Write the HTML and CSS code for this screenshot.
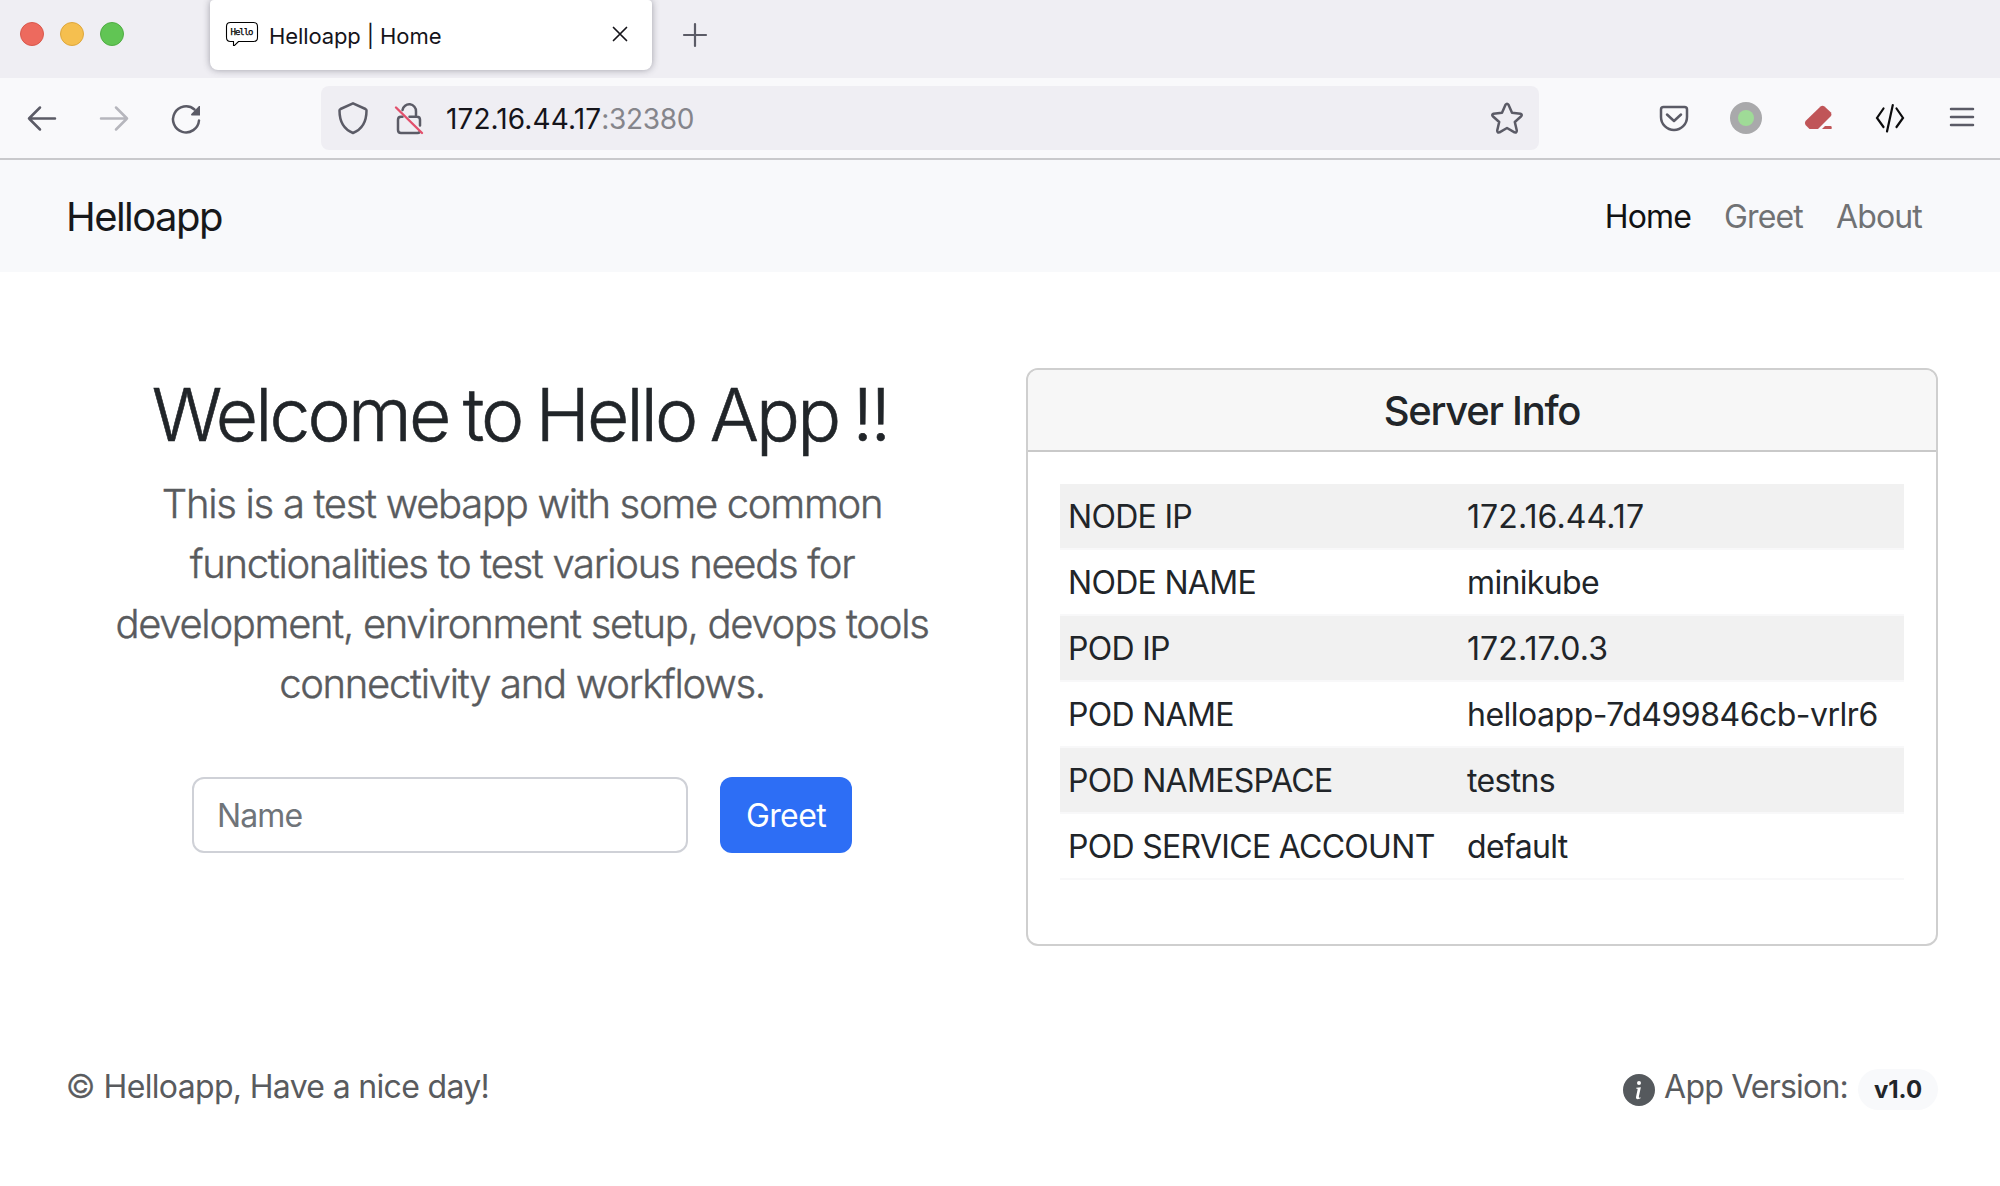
FILE: index.html
```html
<!DOCTYPE html>
<html lang="en">
<head>
<meta charset="utf-8">
<title>Helloapp | Home</title>
<link rel="stylesheet" href="styles.css">
</head>
<body>
<div class="tabstrip">
  <div class="lights"><span class="light light-red"></span><span class="light light-yellow"></span><span class="light light-green"></span></div>
  <div class="tab">
    <svg class="favicon" viewBox="0 0 32 24">
      <path d="M4.500 .5H27.500Q31.500 .5 31.500 4.500V15.500Q31.500 19.500 27.500 19.500H12.500L8.500 23.500H7.500V19.500H4.500Q.5 19.500 .5 15.500V4.500Q.5 .5 4.500 .5Z" fill="none" stroke="#000" stroke-width="1.100"/>
      <text class="favicon-text" x="4.500" y="13.200" textLength="23">Hello</text>
    </svg>
    <span class="tab-title">Helloapp | Home</span>
    <svg class="tab-close" viewBox="0 0 16 16"><path d="M1.500 1.500l13 13M14.500 1.500l-13 13" fill="none" stroke="#15141a" stroke-width="1.700" stroke-linecap="round"/></svg>
  </div>
  <svg class="tab-new" viewBox="0 0 24 24"><path d="M12 1v22M1 12h22" fill="none" stroke="#5b5b66" stroke-width="2.200" stroke-linecap="round"/></svg>
</div>

<div class="toolbar">
  <svg class="icon" viewBox="0 0 32 32"><path d="M29 16.500H3M14 5.500L3 16.500l11 11" class="line"/></svg>
  <svg class="icon icon-dim" viewBox="0 0 32 32"><path d="M3 16.500h26M18 5.500l11 11-11 11" class="line"/></svg>
  <svg class="icon" viewBox="0 0 32 32"><path d="M29 18.500A13 13 0 1 1 24.500 7.500" class="line"/><path d="M30 4V13.500H21.500Q20.500 12.500 21.500 11.700L29 4Z" fill="#5b5b66"/></svg>
  <div class="urlbar">
    <svg class="icon" viewBox="0 0 32 32"><path d="M16 1.300L28.500 7q1 .5 1 1.600C29.500 19 25 27.500 16 31 7 27.500 2.500 19 2.500 8.600q0-1.100 1-1.600Z" class="line"/></svg>
    <svg class="icon icon-lock" viewBox="0 0 32 32"><path d="M9.500 8A6.800 6.800 0 0 1 23 9.500V14.500M16.500 14.800H24Q27 14.800 27 17.800V23.500M9.500 14.800H8Q5 14.800 5 17.800V28Q5 31 8 31H24.500Q26 31 26.600 30" class="line"/><path d="M3 5.500L29 31" fill="none" stroke="#e2506c" stroke-width="2.400" stroke-linecap="round"/></svg>
    <span class="url"><span class="url-host">172.16.44.17</span><span class="url-port">:32380</span></span>
    <svg class="icon" viewBox="0 0 32 32"><path d="M14.500 2.800Q16 .8 17.500 2.800L21 10.800 29.500 11.700Q31.600 12.400 30.200 14.300L23.800 20 25.800 28.500Q25.800 31 23.500 30.400L16 26 8.500 30.400Q6.200 31 6.200 28.500L8.200 20 1.800 14.300Q.4 12.400 2.500 11.700L11 10.800Z" class="line"/></svg>
  </div>
  <div class="actions">
    <svg class="icon" viewBox="0 0 32 32"><path d="M5.500 5H26.500Q29 5 29 7.500V15A13 13 0 0 1 3 15V7.500Q3 5 5.500 5ZM9 12.500L16 19l7-6.500" class="line"/></svg>
    <svg class="icon" viewBox="0 0 32 32"><circle cx="16" cy="16" r="16" fill="#a9a9ab"/><circle cx="16" cy="16" r="8" fill="#9fdb97"/></svg>
    <svg class="icon" viewBox="0 0 32 32"><path d="M18.500 4.500Q20.500 3 22.500 4.500L29 10.500Q30 12.500 28.500 14.500L16 27H7.500L3.500 23Q2.300 20.800 3.500 19Z" fill="#c05558"/><path d="M20 27L23 24H28.500Q30.300 24.200 29.500 27Z" fill="#c05558"/></svg>
    <svg class="icon" viewBox="0 0 32 32"><path d="M9.500 6.500L3 16l6.500 9M22.500 6.500L29 16l-6.500 9M18.800 3L13 29.500" fill="none" stroke="#0c0c0d" stroke-width="2.200" stroke-linecap="round"/></svg>
    <svg class="icon" viewBox="0 0 32 32"><path d="M5 7H27M5 15H27M5 23H27" class="line"/></svg>
  </div>
</div>

<header class="navbar">
  <span class="brand">Helloapp</span>
  <nav class="nav"><a class="nav-link active">Home</a><a class="nav-link">Greet</a><a class="nav-link">About</a></nav>
</header>

<main class="columns">
  <section class="welcome">
    <h1 class="title">Welcome to Hello App !!</h1>
    <p class="lead">This is a test webapp with some common<br>functionalities to test various needs for<br>development, environment setup, devops tools<br>connectivity and workflows.</p>
    <form class="greet-form">
      <input class="name-input" type="text" placeholder="Name">
      <button class="greet-button" type="button">Greet</button>
    </form>
  </section>
  <section class="card">
    <h2 class="card-header">Server Info</h2>
    <div class="info">
      <div class="row"><span class="key">NODE IP</span><span class="digits">172.16.44.17</span></div>
      <div class="row"><span class="key">NODE NAME</span><span class="value">minikube</span></div>
      <div class="row"><span class="key">POD IP</span><span class="digits">172.17.0.3</span></div>
      <div class="row"><span class="key">POD NAME</span><span class="mixed">helloapp-7d499846cb-vrlr6</span></div>
      <div class="row"><span class="key">POD NAMESPACE</span><span class="value">testns</span></div>
      <div class="row"><span class="key">POD SERVICE ACCOUNT</span><span class="value">default</span></div>
    </div>
  </section>
</main>

<footer class="footer">
  <span class="copyright"><span class="copy-sign">©</span>Helloapp, Have a nice day!</span>
  <div class="version">
    <svg class="info-icon" viewBox="0 0 16 16"><path fill="#55595d" d="M8 16A8 8 0 1 0 8 0a8 8 0 0 0 0 16zm.93-9.412-1 4.705c-.07.34.029.533.304.533.194 0 .487-.07.686-.246l-.088.416c-.287.346-.92.598-1.465.598-.703 0-1.002-.422-.808-1.319l.738-3.468c.064-.293.006-.399-.287-.47l-.451-.081.082-.381 2.290-.287zM8 5.500a1 1 0 1 1 0-2 1 1 0 0 1 0 2z"/></svg>
    <span class="version-label">App Version:</span>
    <span class="badge">v1.0</span>
  </div>
</footer>
</body>
</html>
```
FILE: styles.css
```css
* { box-sizing: border-box; }

body {
  margin: 0;
  height: 1186px;
  overflow: hidden;
  background: #fff;
  color: #212529;
  font: 32px/48px Inter, "Liberation Sans", sans-serif;
}

svg { display: block; flex: none; overflow: visible; }

/* Browser chrome */
.tabstrip {
  display: flex;
  align-items: flex-start;
  height: 78px;
  background: #efeef3;
}
.lights { display: flex; gap: 16px; padding: 22px 0 0 20px; }
.light { width: 24px; height: 24px; border-radius: 50%; border: 1px solid; }
.light-red { background: #ed6a5e; border-color: #d9584c; }
.light-yellow { background: #f5bf4f; border-color: #dea73c; }
.light-green { background: #61c554; border-color: #50ad43; }
.tab {
  display: flex;
  align-items: flex-start;
  width: 442px;
  height: 70px;
  margin-left: 86px;
  padding: 22px 24px 0 16px;
  border-radius: 4px 4px 8px 8px;
  background: #fff;
  box-shadow: 0 0 7px rgba(60, 60, 75, .45);
}
.favicon { width: 32px; height: 24px; }
.favicon-text { font: 9px "DejaVu Sans Mono", monospace; stroke: #000; stroke-width: .25px; }
.tab-title {
  flex: 1;
  margin-left: 11px;
  color: #15141a;
  font-size: 22px;
  line-height: 28px;
  letter-spacing: -.1px;
}
.tab-close { width: 16px; height: 16px; margin-top: 4px; }
.tab-new { width: 24px; height: 24px; margin: 23px 0 0 31px; }

.toolbar {
  display: flex;
  align-items: center;
  height: 82px;
  padding: 0 22px 0 26px;
  gap: 40px;
  background: #f9f9fb;
  border-bottom: 2px solid #c9c9cc;
}
.icon { width: 32px; height: 32px; }
.icon-dim { opacity: .42; }
.icon-lock { margin-left: 24px; }
.line {
  fill: none;
  stroke: #5b5b66;
  stroke-width: 2.5;
  stroke-linecap: round;
  stroke-linejoin: round;
}
.urlbar {
  display: flex;
  align-items: center;
  width: 1218px;
  height: 64px;
  margin-left: 79px;
  padding: 0 16px;
  border-radius: 8px;
  background: #efeef3;
}
.url { flex: 1; margin: 2px 0 0 21px; font-size: 28px; color: #15141a; }
.url-host { letter-spacing: .1px; }
.url-port { color: #85858b; letter-spacing: -.3px; }
.actions { display: flex; gap: 40px; margin-left: auto; }

/* Page header */
.navbar {
  display: flex;
  align-items: center;
  justify-content: space-between;
  height: 112px;
  padding: 2px 78px 0 66px;
  background: #f8f9fb;
}
.brand { font-size: 40px; letter-spacing: -1.55px; color: #17181a; }
.nav { display: flex; gap: 33px; letter-spacing: -.85px; }
.nav-link { color: #707274; }
.nav-link.active { color: #111213; }

/* Main content */
.columns {
  display: grid;
  grid-template-columns: 912px 912px;
  gap: 48px;
  padding: 96px 66px 0;
}
.welcome { display: flex; flex-direction: column; align-items: center; padding-top: 3px; }
.title {
  margin: 0 4px 0 0;
  font-size: 73px;
  line-height: 88px;
  font-weight: 300;
  letter-spacing: -2.8px;
  word-spacing: -3.5px;
  white-space: nowrap;
  -webkit-text-stroke: .6px currentColor;
}
.lead {
  margin: 15px 0 0;
  color: #595b5e;
  font-size: 40px;
  line-height: 60px;
  font-weight: 300;
  letter-spacing: -1.3px;
  text-align: center;
  white-space: nowrap;
  -webkit-text-stroke: .4px currentColor;
}
.greet-form { display: flex; gap: 32px; margin: 63px 0 0; }
.name-input {
  width: 496px;
  height: 76px;
  padding: 0 24px 0 23px;
  border: 2px solid #cfd1d7;
  border-radius: 12px;
  background: #fff;
  font: 32px/48px Inter, "Liberation Sans", sans-serif;
  letter-spacing: -.9px;
}
.name-input::placeholder { color: #6f7479; opacity: 1; }
.greet-button {
  width: 132px;
  height: 76px;
  padding: 2px 0 0;
  border: 0;
  border-radius: 12px;
  background: #2d6ef5;
  color: #fff;
  font: 32px/48px Inter, "Liberation Sans", sans-serif;
  letter-spacing: -.6px;
}

.card {
  height: 578px;
  border: 2px solid #cfcfcf;
  border-radius: 12px;
  overflow: hidden;
}
.card-header {
  margin: 0;
  height: 82px;
  border-bottom: 2px solid #c9c9c9;
  background: #f7f7f7;
  font-size: 40px;
  line-height: 82px;
  font-weight: 500;
  letter-spacing: -1.28px;
  text-align: center;
}
.info { padding: 32px 32px 0; }
.row {
  display: grid;
  grid-template-columns: 399px 1fr;
  height: 66px;
  padding-left: 8px;
  border-bottom: 2px solid #f8f8f9;
  line-height: 66px;
}
.row:nth-child(odd) { background: #f1f1f1; }
.key { letter-spacing: -.7px; }
.value { letter-spacing: -.65px; }
.digits { letter-spacing: .1px; }
.mixed { letter-spacing: -.5px; }

/* Footer */
.footer {
  display: flex;
  justify-content: space-between;
  align-items: flex-start;
  padding: 117px 62px 0 66px;
  color: #595b5e;
}
.copyright { letter-spacing: -.67px; }
.copy-sign { margin-right: 9px; font-weight: 300; -webkit-text-stroke: .5px currentColor; }
.version { display: flex; align-items: flex-start; }
.info-icon { width: 32px; height: 32px; margin: 11px 9px 0 0; }
.version-label { letter-spacing: -.79px; }
.badge {
  width: 80px;
  height: 41px;
  margin: 6px 0 0 10px;
  border-radius: 21px;
  background: #f8f9fb;
  color: #212529;
  font-size: 24px;
  line-height: 42px;
  font-weight: 700;
  text-align: center;
}
```
